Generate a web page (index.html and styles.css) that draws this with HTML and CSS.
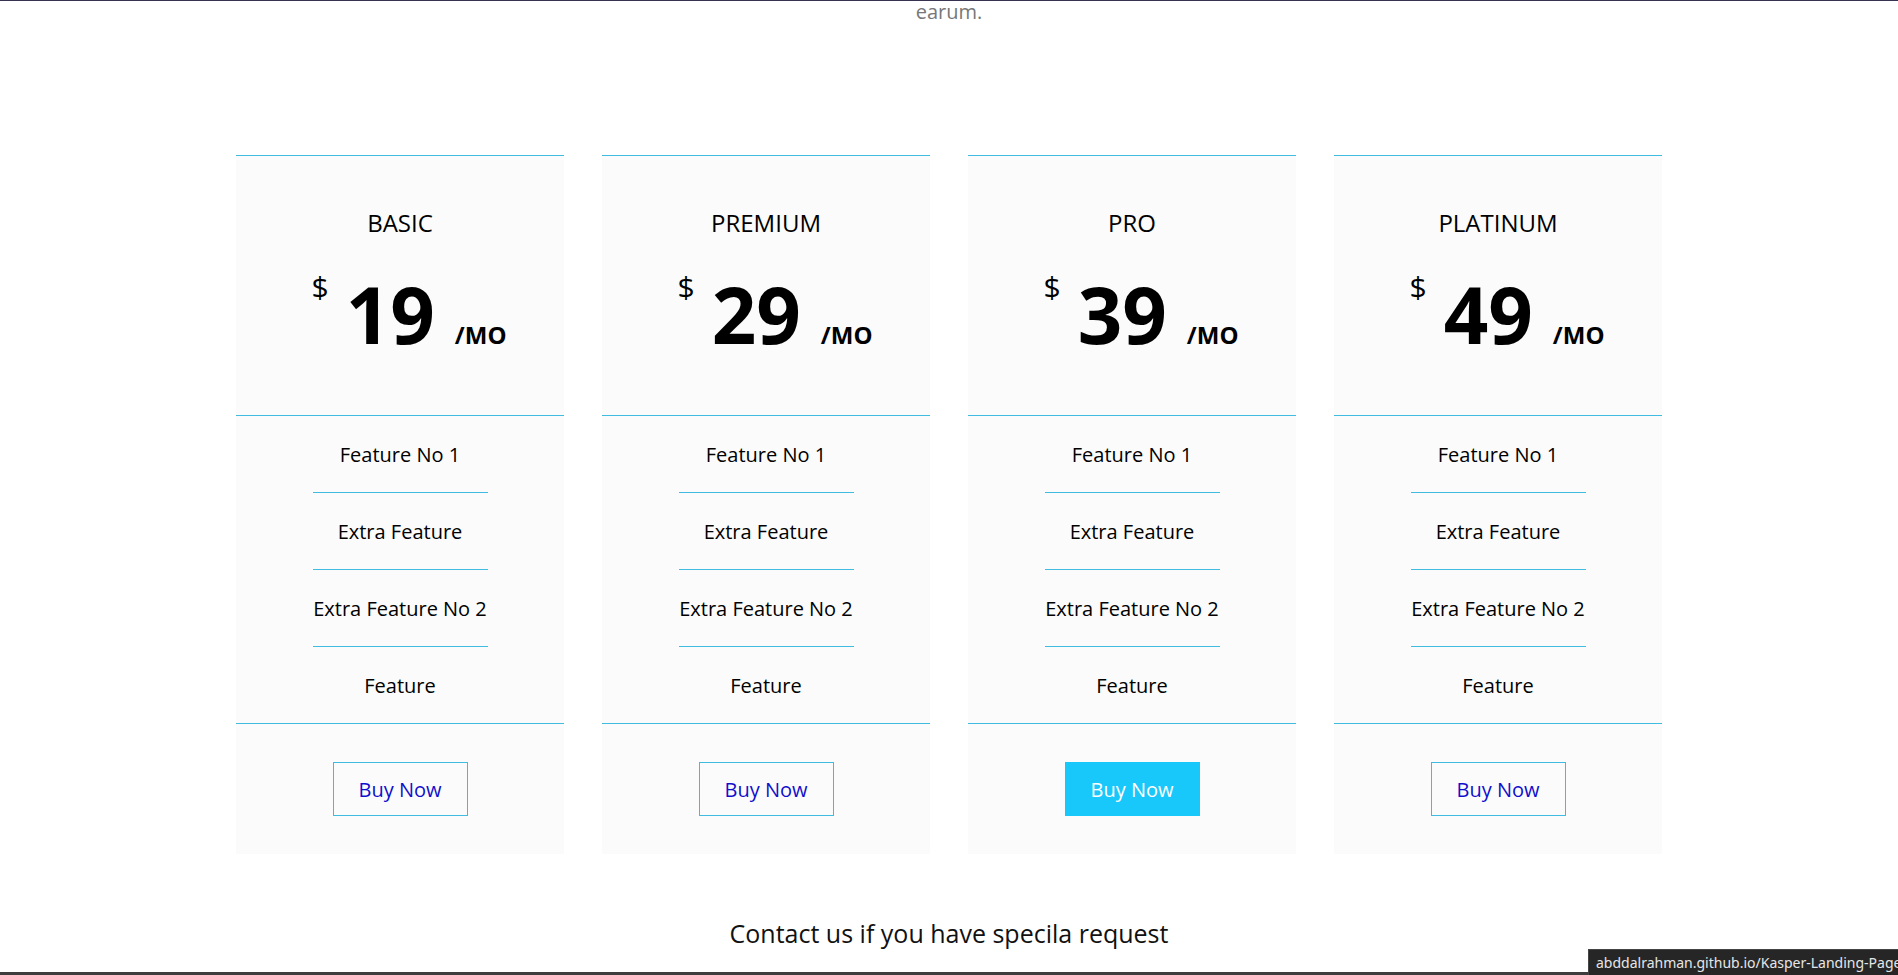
FILE: index.html
```html
<!DOCTYPE html>
<html lang="en">
<head>
<meta charset="utf-8">
<title>Pricing</title>
<link rel="stylesheet" href="styles.css">
</head>
<body>
<section class="pricing">
  <p class="intro">earum.</p>
  <div class="plans">
    <div class="plan">
      <div class="head">
        <h3>BASIC</h3>
        <div class="price"><span class="cur">$</span><span class="amount">19</span><span class="per">/MO</span></div>
      </div>
      <ul class="features">
        <li>Feature No 1</li>
        <li>Extra Feature</li>
        <li>Extra Feature No 2</li>
        <li>Feature</li>
      </ul>
      <div class="foot"><a class="btn" href="#">Buy Now</a></div>
    </div>
    <div class="plan">
      <div class="head">
        <h3>PREMIUM</h3>
        <div class="price"><span class="cur">$</span><span class="amount">29</span><span class="per">/MO</span></div>
      </div>
      <ul class="features">
        <li>Feature No 1</li>
        <li>Extra Feature</li>
        <li>Extra Feature No 2</li>
        <li>Feature</li>
      </ul>
      <div class="foot"><a class="btn" href="#">Buy Now</a></div>
    </div>
    <div class="plan">
      <div class="head">
        <h3>PRO</h3>
        <div class="price"><span class="cur">$</span><span class="amount">39</span><span class="per">/MO</span></div>
      </div>
      <ul class="features">
        <li>Feature No 1</li>
        <li>Extra Feature</li>
        <li>Extra Feature No 2</li>
        <li>Feature</li>
      </ul>
      <div class="foot"><a class="btn btn-active" href="#">Buy Now</a></div>
    </div>
    <div class="plan">
      <div class="head">
        <h3>PLATINUM</h3>
        <div class="price"><span class="cur">$</span><span class="amount">49</span><span class="per">/MO</span></div>
      </div>
      <ul class="features">
        <li>Feature No 1</li>
        <li>Extra Feature</li>
        <li>Extra Feature No 2</li>
        <li>Feature</li>
      </ul>
      <div class="foot"><a class="btn" href="#">Buy Now</a></div>
    </div>
  </div>
  <p class="contact">Contact us if you have specila request</p>
</section>
<div class="bottom-line"></div>
<div class="status-tip">abddalrahman.github.io/Kasper-Landing-Page</div>
</body>
</html>
```

FILE: styles.css
```css
* {
  box-sizing: border-box;
}

html, body {
  margin: 0;
  padding: 0;
}

body {
  font-family: "Open Sans", "Noto Sans", sans-serif;
  color: #000;
  background: #fff;
  border-top: 1px solid #36324f;
  overflow: hidden;
  height: 975px;
}

.pricing {
  display: flex;
  flex-direction: column;
  align-items: center;
}

.intro {
  margin: -1px 0 0;
  font-size: 20px;
  line-height: 24px;
  color: #777;
}

.plans {
  width: 1426px;
  margin-top: 131px;
  display: grid;
  grid-template-columns: repeat(4, 1fr);
  gap: 38px;
}

.plan {
  background: #fbfbfb;
  border-top: 1px solid #3fbce0;
  text-align: center;
}

.head {
  padding: 50px 0 62px;
  border-bottom: 1px solid #3fbce0;
}

.head h3 {
  margin: 0;
  font-size: 24px;
  line-height: 33px;
  font-weight: normal;
}

.price {
  margin-top: 36px;
  padding-left: 18px;
  display: flex;
  justify-content: center;
  align-items: baseline;
  line-height: 1;
}

.cur {
  align-self: flex-start;
  font-size: 30px;
  margin-top: -3px;
}

.amount {
  font-size: 78px;
  font-weight: bold;
  padding: 0 20px 0 17px;
}

.per {
  font-size: 24px;
  font-weight: bold;
}

.features {
  list-style: none;
  margin: 0;
  padding: 0;
  border-bottom: 1px solid #3fbce0;
}

.features li {
  width: 175px;
  margin: 0 auto;
  padding: 25px 0 23px;
  font-size: 20px;
  line-height: 28px;
  border-bottom: 1px solid #3fbce0;
  white-space: nowrap;
}

.features li:last-child {
  border-bottom: 0;
}

.foot {
  padding: 38px 0;
  display: flex;
  justify-content: center;
}

.btn {
  display: flex;
  align-items: center;
  justify-content: center;
  width: 135px;
  height: 54px;
  border: 1px solid #3fbce0;
  color: #1010cc;
  text-decoration: none;
  font-size: 20px;
}

.btn-active {
  background: #19c8fa;
  border-color: #19c8fa;
  color: #fff;
}

.contact {
  margin: 63px 0 0;
  font-size: 25px;
  line-height: 33px;
  color: #111;
}

.bottom-line {
  position: fixed;
  left: 0;
  right: 0;
  bottom: 0;
  height: 3px;
  background: #3d3d3d;
}

.status-tip {
  position: fixed;
  left: 1588px;
  bottom: 0;
  height: 26px;
  padding: 2px 0 0 7px;
  width: 320px;
  background: #262626;
  border: 1px solid #444;
  border-bottom: 0;
  color: #e6e6e6;
  font-family: "Noto Sans", "Open Sans", sans-serif;
  font-size: 14px;
  line-height: 21px;
  white-space: nowrap;
  overflow: hidden;
}
```
